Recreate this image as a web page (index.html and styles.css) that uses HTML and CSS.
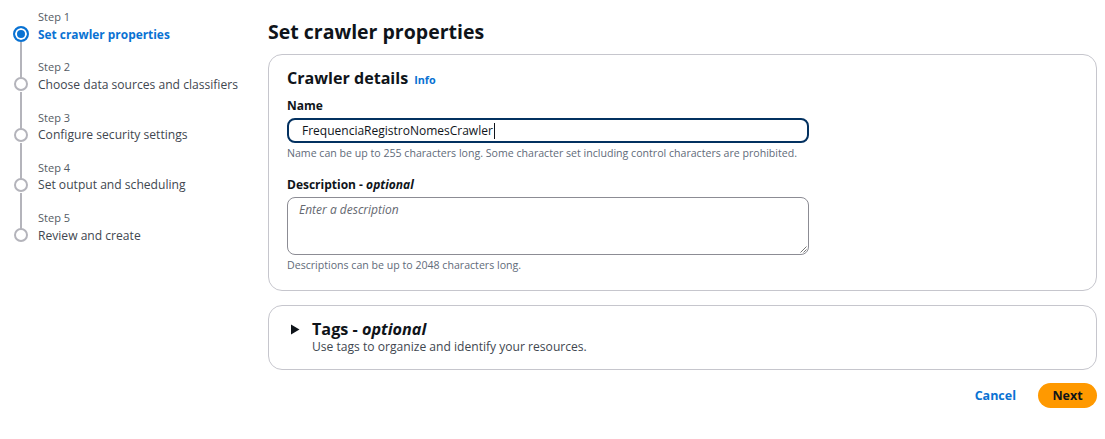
FILE: index.html
```html
<!DOCTYPE html>
<html>
<head>
<meta charset="utf-8">
<link rel="stylesheet" href="styles.css">
</head>
<body>
<div class="page">
  <nav class="steps">
    <div class="step active">
      <div class="step-label">Step 1</div>
      <div class="step-row"><span class="dot"></span><span class="step-title">Set crawler properties</span></div>
    </div>
    <div class="step">
      <div class="step-label">Step 2</div>
      <div class="step-row"><span class="dot"></span><span class="step-title">Choose data sources and classifiers</span></div>
    </div>
    <div class="step">
      <div class="step-label">Step 3</div>
      <div class="step-row"><span class="dot"></span><span class="step-title">Configure security settings</span></div>
    </div>
    <div class="step">
      <div class="step-label">Step 4</div>
      <div class="step-row"><span class="dot"></span><span class="step-title">Set output and scheduling</span></div>
    </div>
    <div class="step last">
      <div class="step-label">Step 5</div>
      <div class="step-row"><span class="dot"></span><span class="step-title">Review and create</span></div>
    </div>
  </nav>
  <main class="main">
    <h1 class="page-title">Set crawler properties</h1>
    <section class="card details">
      <h2 class="card-title">Crawler details <a class="info">Info</a></h2>
      <div class="field">
        <label class="label">Name</label>
        <div class="input focused"><span>FrequenciaRegistroNomesCrawler</span><span class="caret"></span></div>
        <div class="hint">Name can be up to 255 characters long. Some character set including control characters are prohibited.</div>
      </div>
      <div class="field">
        <label class="label">Description - <i>optional</i></label>
        <div class="textarea"><span class="placeholder">Enter a description</span>
          <svg class="grip" width="7" height="7" viewBox="0 0 7 7"><path d="M6.5 0.5 L0.5 6.5 M6.5 3.5 L3.5 6.5" stroke="#777" stroke-width="1"/></svg>
        </div>
        <div class="hint">Descriptions can be up to 2048 characters long.</div>
      </div>
    </section>
    <section class="card tags">
      <div class="tags-head">
        <svg class="caret-icon" width="10" height="11" viewBox="0 0 10 11"><path d="M1 0.5 L9.5 5.5 L1 10.5 Z" fill="#0f141a"/></svg>
        <div>
          <h2 class="tags-title">Tags - <i>optional</i></h2>
          <div class="tags-desc">Use tags to organize and identify your resources.</div>
        </div>
      </div>
    </section>
    <div class="actions">
      <a class="cancel">Cancel</a>
      <button class="next">Next</button>
    </div>
  </main>
</div>
</body>
</html>
```

FILE: styles.css
```css
* { box-sizing: border-box; }
body {
  margin: 0;
  background: #fff;
  font-family: "Open Sans", "Noto Sans", Arial, sans-serif;
  color: #0f141a;
}
.page {
  display: flex;
  padding: 9px 8px 0 14px;
}
.steps {
  width: 254px;
  flex: none;
}
.step {
  position: relative;
  height: 50.3px;
}
.step::after {
  content: "";
  position: absolute;
  left: 6px;
  top: 33px;
  width: 2px;
  height: 43px;
  background: #b4b4bb;
}
.step.last::after { display: none; }
.step-label {
  padding-left: 24px;
  font-size: 11px;
  line-height: 16px;
  color: #545b64;
}
.step-row {
  display: flex;
  align-items: center;
  gap: 10px;
  height: 18px;
}
.dot {
  width: 14px;
  height: 14px;
  border-radius: 50%;
  border: 2px solid #b4b4bb;
  background: #fff;
  flex: none;
}
.step.active .dot {
  width: 16px;
  height: 16px;
  margin: 0 -1px;
  border-color: #0972d3;
  box-shadow: inset 0 0 0 2px #fff;
  background: #0972d3;
}
.step-title {
  font-size: 12.1px;
  color: #414750;
  white-space: nowrap;
}
.step.active .step-title {
  color: #0972d3;
  font-weight: 700;
  font-size: 11.9px;
}
.main {
  flex: 1;
  min-width: 0;
}
.page-title {
  margin: 10px 0 9px;
  font-size: 19.5px;
  line-height: 26px;
  font-weight: 700;
}
.card {
  border: 1px solid #c6c6cd;
  border-radius: 14px;
  background: #fff;
}
.details {
  padding: 12px 18px 15px;
  height: 237px;
}
.card-title {
  margin: 0 0 7px;
  font-size: 16.1px;
  line-height: 22px;
  font-weight: 700;
  display: flex;
  align-items: baseline;
  gap: 6px;
}
.info {
  font-size: 10.8px;
  color: #0972d3;
  font-weight: 700;
}
.field { margin-bottom: 17px; }
.label {
  display: block;
  font-size: 12px;
  font-weight: 700;
  line-height: 16px;
  margin-bottom: 4px;
}
.input {
  width: 522px;
  height: 25px;
  border: 2px solid #033160;
  border-radius: 8px;
  padding: 0 13px;
  display: flex;
  align-items: center;
  font-size: 12px;
  color: #0f141a;
}
.caret {
  width: 1px;
  height: 16px;
  background: #0f141a;
  margin-left: 1px;
}
.hint {
  font-size: 10.6px;
  line-height: 14px;
  color: #5f6b7a;
  margin-top: 3px;
}
.textarea {
  position: relative;
  width: 522px;
  height: 58px;
  border: 1px solid #8c8c94;
  border-radius: 8px;
  padding: 2px 11px;
  line-height: 16px;
}
.placeholder {
  font-size: 12px;
  font-style: italic;
  color: #656871;
}
.grip {
  position: absolute;
  right: 1px;
  bottom: 1px;
}
.tags {
  margin-top: 14px;
  height: 65px;
  padding: 13px 18px;
}
.tags-head {
  display: flex;
  align-items: flex-start;
  gap: 12px;
}
.caret-icon { margin: 5px 0 0 3px; }
.tags-title {
  margin: 0;
  font-size: 16.2px;
  line-height: 20px;
  font-weight: 700;
}
.tags-desc {
  font-size: 12.1px;
  line-height: 16px;
  color: #414750;
}
.actions {
  display: flex;
  justify-content: flex-end;
  align-items: center;
  gap: 22px;
  margin-top: 13px;
}
.cancel {
  color: #0972d3;
  font-weight: 700;
  font-size: 12.5px;
}
.next {
  border: 0;
  background: #ff9900;
  border-radius: 14px;
  width: 59px;
  height: 25px;
  font-family: inherit;
  font-weight: 700;
  font-size: 12.5px;
  color: #0f141a;
}
```
